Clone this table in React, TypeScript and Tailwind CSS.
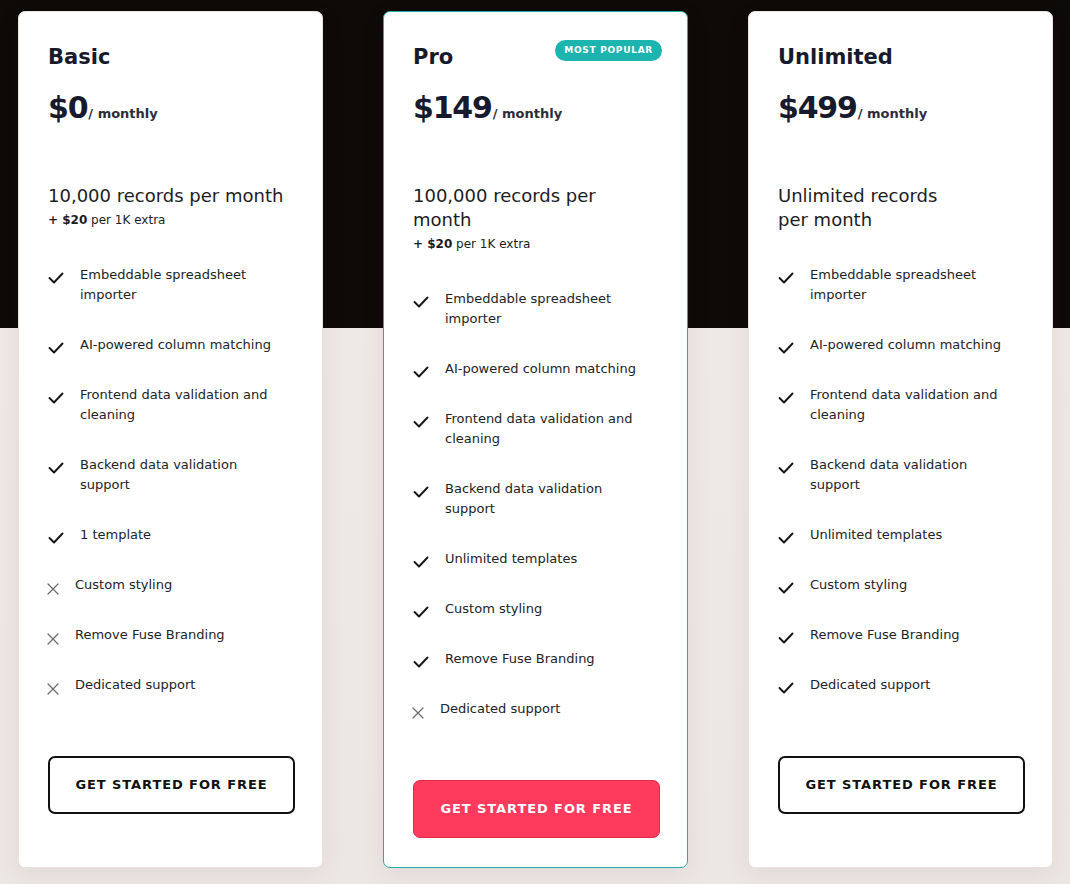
import React from "react";

type Feature = { label: string; on: boolean };

const plans: {
  name: string;
  price: string;
  records: React.ReactNode;
  extra?: string;
  popular?: boolean;
  features: Feature[];
}[] = [
  {
    name: "Basic",
    price: "$0",
    records: "10,000 records per month",
    extra: "$20",
    features: [
      { label: "Embeddable spreadsheet importer", on: true },
      { label: "AI-powered column matching", on: true },
      { label: "Frontend data validation and cleaning", on: true },
      { label: "Backend data validation support", on: true },
      { label: "1 template", on: true },
      { label: "Custom styling", on: false },
      { label: "Remove Fuse Branding", on: false },
      { label: "Dedicated support", on: false },
    ],
  },
  {
    name: "Pro",
    price: "$149",
    records: "100,000 records per month",
    extra: "$20",
    popular: true,
    features: [
      { label: "Embeddable spreadsheet importer", on: true },
      { label: "AI-powered column matching", on: true },
      { label: "Frontend data validation and cleaning", on: true },
      { label: "Backend data validation support", on: true },
      { label: "Unlimited templates", on: true },
      { label: "Custom styling", on: true },
      { label: "Remove Fuse Branding", on: true },
      { label: "Dedicated support", on: false },
    ],
  },
  {
    name: "Unlimited",
    price: "$499",
    records: (
      <>
        Unlimited records
        <br />
        per month
      </>
    ),
    features: [
      { label: "Embeddable spreadsheet importer", on: true },
      { label: "AI-powered column matching", on: true },
      { label: "Frontend data validation and cleaning", on: true },
      { label: "Backend data validation support", on: true },
      { label: "Unlimited templates", on: true },
      { label: "Custom styling", on: true },
      { label: "Remove Fuse Branding", on: true },
      { label: "Dedicated support", on: true },
    ],
  },
];

function Check() {
  return (
    <svg width="16" height="12" viewBox="0 0 16 12" fill="none" className="mt-[7px]">
      <polyline points="1.5,6 6,10.5 14.5,1.5" stroke="#151515" strokeWidth="1.9" strokeLinecap="round" strokeLinejoin="round" />
    </svg>
  );
}

function Cross() {
  return (
    <svg width="12" height="12" viewBox="0 0 12 12" fill="none" className="mt-[8px]">
      <path d="M1 1L11 11M11 1L1 11" stroke="#6b6b6b" strokeWidth="1.2" strokeLinecap="round" />
    </svg>
  );
}

export default function App() {
  return (
    <div
      className="min-h-[884px] w-full bg-[linear-gradient(to_bottom,#0e0a08_0px,#0e0a08_328px,#efe9e6_328px,#ede7e4_100%)]"
      style={{ fontFamily: '"DejaVu Sans", sans-serif' }}
    >
      <div className="flex items-stretch gap-[60px] pl-[18px] pt-[11px]">
        {plans.map((plan) => (
          <div
            key={plan.name}
            className={`flex w-[305px] shrink-0 flex-col rounded-[7px] bg-white pl-[29px] pr-[27px] pt-[31px] pb-[29px] shadow-[0_6px_24px_rgba(60,40,30,0.08)] border ${
              plan.popular ? "border-[#22aea8]" : "border-[#e9e2df]"
            }`}
          >
            {/* Header */}
            <div className="flex items-start justify-between">
              <h3 className="text-[21px] leading-[28px] font-bold text-[#171a2c]">{plan.name}</h3>
              {plan.popular && (
                <span className="-mt-[3px] -mr-[2px] rounded-full bg-[#1cb4ae] px-[9px] py-[5px] text-[9px] leading-[11px] font-bold tracking-[0.08em] text-white">
                  MOST POPULAR
                </span>
              )}
            </div>

            {/* Price */}
            <div className="mt-[17px] flex items-baseline">
              <span className="text-[30px] leading-[40px] font-bold tracking-[-0.04em] text-[#171a2c]">{plan.price}</span>
              <span className="ml-[1px] text-[13px] font-semibold text-[#2b2d3a]">/ monthly</span>
            </div>

            {/* Records */}
            <p className="mt-[56px] max-w-[240px] text-[18px] leading-[24px] text-[#1c1c1f]">{plan.records}</p>
            {plan.extra && (
              <p className="mt-[2px] text-[12px] leading-[20px] text-[#1c1c1f]">
                <span className="font-bold">+ {plan.extra}</span> per 1K extra
              </p>
            )}

            {/* Features */}
            <ul className={`flex flex-col gap-[30px] ${plan.extra ? "mt-[35px]" : "mt-[33px]"}`}>
              {plan.features.map((f) => (
                <li key={f.label} className="flex items-start">
                  {f.on ? (
                    <span className="flex w-[32px] shrink-0">
                      <Check />
                    </span>
                  ) : (
                    <span className="-ml-[1px] flex w-[28px] shrink-0">
                      <Cross />
                    </span>
                  )}
                  <span className="max-w-[200px] text-[13px] leading-[20px] text-[#222326]">{f.label}</span>
                </li>
              ))}
            </ul>

            {/* CTA */}
            <button
              className={`mt-[61px] h-[58px] w-full rounded-[7px] text-[13px] font-bold tracking-[0.07em] ${
                plan.popular
                  ? "border border-[#e02a4c] bg-[#fe3a5d] text-white"
                  : "border-2 border-[#111111] bg-white text-[#111111]"
              }`}
            >
              GET STARTED FOR FREE
            </button>
          </div>
        ))}
      </div>
    </div>
  );
}
